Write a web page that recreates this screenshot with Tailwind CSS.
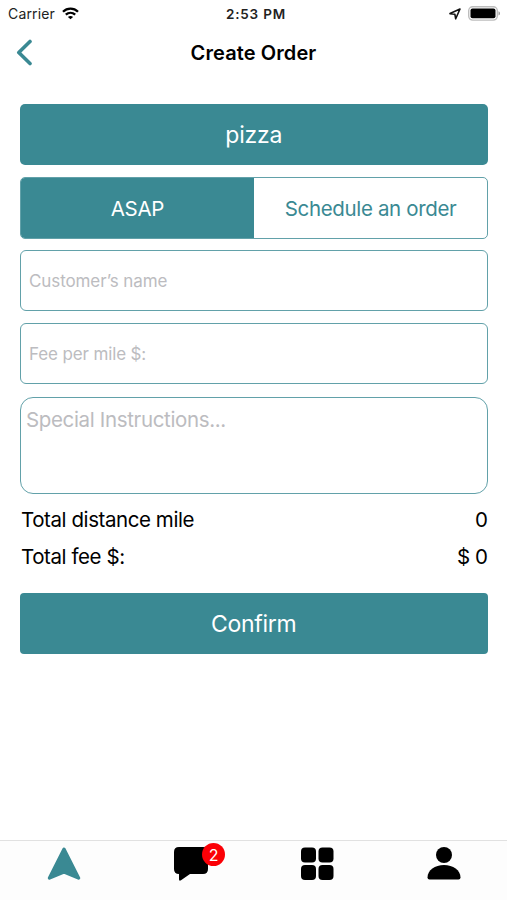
<!DOCTYPE html>
<html lang="en">
<head>
<meta charset="utf-8">
<title>Create Order</title>
<script src="https://cdn.jsdelivr.net/npm/@tailwindcss/browser@4"></script>
</head>
<body class="bg-white">
<div class="flex h-[900px] w-[507px] flex-col overflow-hidden bg-white font-['Inter',sans-serif] text-black">
  <!-- Status bar -->
  <div class="grid h-[27px] grid-cols-3 items-center pr-[7px] pl-2">
    <div class="flex items-center gap-[7px]">
      <span class="text-[14px] tracking-[0.15px] text-[#222]">Carrier</span>
      <svg class="h-[13px] w-[17px]" viewBox="0 0 17 13" fill="none" stroke="#000" stroke-width="2.3"><path d="M1 4.700C5.200.6 11.800.6 16 4.700M3.800 7.700c2.700-2.500 6.700-2.500 9.400 0"/><path d="M8.500 12.300 5.900 9.900c1.500-1.200 3.700-1.200 5.200 0z" fill="#000" stroke="none"/></svg>
    </div>
    <div class="pt-px pl-[4px] text-center text-[13.500px] font-semibold tracking-[0.800px] text-[#222]">2:53 PM</div>
    <div class="flex items-center justify-end gap-[7px]">
      <svg class="h-3 w-3" viewBox="0 0 12 12" fill="none" stroke="#111" stroke-width="1.600" stroke-linejoin="round"><path d="M11 1 6.700 10.800 5.900 6.300 1 5.600z"/></svg>
      <svg class="h-[15px] w-8" viewBox="0 0 32 15"><rect x=".7" y=".7" width="28.600" height="13.400" rx="4" fill="#fff" stroke="#bdbdbd" stroke-width="1.400"/><rect x="2.500" y="2.500" width="25" height="9.800" rx="2" fill="#000"/><path d="M30.500 5.200q1.500.6 1.500 2.200t-1.500 2.200z" fill="#999"/></svg>
    </div>
  </div>
  <!-- Navigation bar -->
  <div class="grid h-[49px] grid-cols-[60px_1fr_60px] items-center">
    <svg class="ml-4 h-7 w-4" viewBox="0 0 16 28" fill="none" stroke="#3a8993" stroke-width="3.600" stroke-linecap="round" stroke-linejoin="round"><path d="M14 3.500 2.800 14.500 14 25.500"/></svg>
    <h1 class="pt-[2px] text-center text-[20px] font-semibold tracking-[0.100px]">Create Order</h1>
  </div>
  <!-- Order form -->
  <main class="flex flex-1 flex-col pt-[27.500px] pr-[19.500px] pl-5">
    <div class="flex h-[61px] items-center justify-center rounded-[5px] bg-[#3a8993] pt-[2px] text-[23px] tracking-[-0.200px] text-white">pizza</div>
    <div class="mt-3 flex h-[62px] overflow-hidden rounded-[5px] border-[1.500px] border-[#62a1a9] text-[20.500px] tracking-[-0.350px]">
      <div class="flex w-1/2 items-center justify-center bg-[#3a8993] pt-[3px] text-white">ASAP</div>
      <div class="flex w-1/2 items-center justify-center pt-[3px] pl-px text-[#3a8993]">Schedule an order</div>
    </div>
    <div class="mt-[11px] flex h-[61px] items-center rounded-[6px] border border-[#62a1a9] pt-[3px] pl-2 text-[17px] tracking-[-0.100px] text-[#bcbcc0]">Customer’s name</div>
    <div class="mt-3 flex h-[61px] items-center rounded-[6px] border border-[#62a1a9] pt-[3px] pl-2 text-[17px] tracking-[-0.130px] text-[#bcbcc0]">Fee per mile $:</div>
    <div class="mt-[13px] h-[97.500px] rounded-[13px] border border-[#62a1a9] px-[5px] pt-[9px] text-[20.500px] leading-[26px] tracking-[-0.350px] text-[#bcbcc0]">Special Instructions...</div>
    <div class="mt-[7.500px] flex h-[37px] items-center justify-between pl-px text-[20.500px] tracking-[-0.420px]"><span>Total distance mile</span><span>0</span></div>
    <div class="flex h-[37px] items-center justify-between pl-px text-[20.500px] tracking-[-0.420px]"><span>Total fee $:</span><span>$ 0</span></div>
    <div class="mt-[17px] flex h-[61px] items-center justify-center rounded-[4px] bg-[#3a8993] pt-[2px] text-[23px] tracking-[-0.300px] text-white">Confirm</div>
  </main>
  <!-- Tab bar -->
  <nav class="grid h-[60.500px] grid-cols-4 justify-items-center border-t border-[#e1e1e1] bg-[#fdfdfd] pt-[6.500px]">
    <svg class="ml-0.5 h-[34px] w-[34px]" viewBox="0 0 34 34"><path d="M17 2.200 31.500 31 17 25 2.500 31z" fill="#3a8993" stroke="#3a8993" stroke-width="3.400" stroke-linejoin="round"/></svg>
    <div class="relative ml-0.5 h-[34px] w-[34px]">
      <svg class="h-[34px] w-[34px]" viewBox="0 0 34 34"><path d="M5 0h24q5 0 5 5v17q0 5-5 5H16L7 33.300q-2 1-2-1V27q-5 0-5-5V5q0-5 5-5z"/></svg>
      <span class="absolute top-[-4px] left-[28px] flex h-[23px] w-[23px] items-center justify-center rounded-full bg-[#fb0006] text-[16px] text-white">2</span>
    </div>
    <svg class="ml-px h-[34px] w-[34px]" viewBox="0 0 34 34"><rect x="1" y=".5" width="15" height="15" rx="4"/><rect x="18.500" y=".5" width="15" height="15" rx="4"/><rect x="1" y="18" width="15" height="15" rx="4"/><rect x="18.500" y="18" width="15" height="15" rx="4"/></svg>
    <svg class="h-[34px] w-[34px]" viewBox="0 0 34 34"><circle cx="17" cy="8" r="8"/><path d="M.5 30.500C.5 23 8 18 17 18s16.500 5 16.500 12.500q0 2-2 2h-29q-2 0-2-2z"/></svg>
  </nav>
</div>
</body>
</html>
